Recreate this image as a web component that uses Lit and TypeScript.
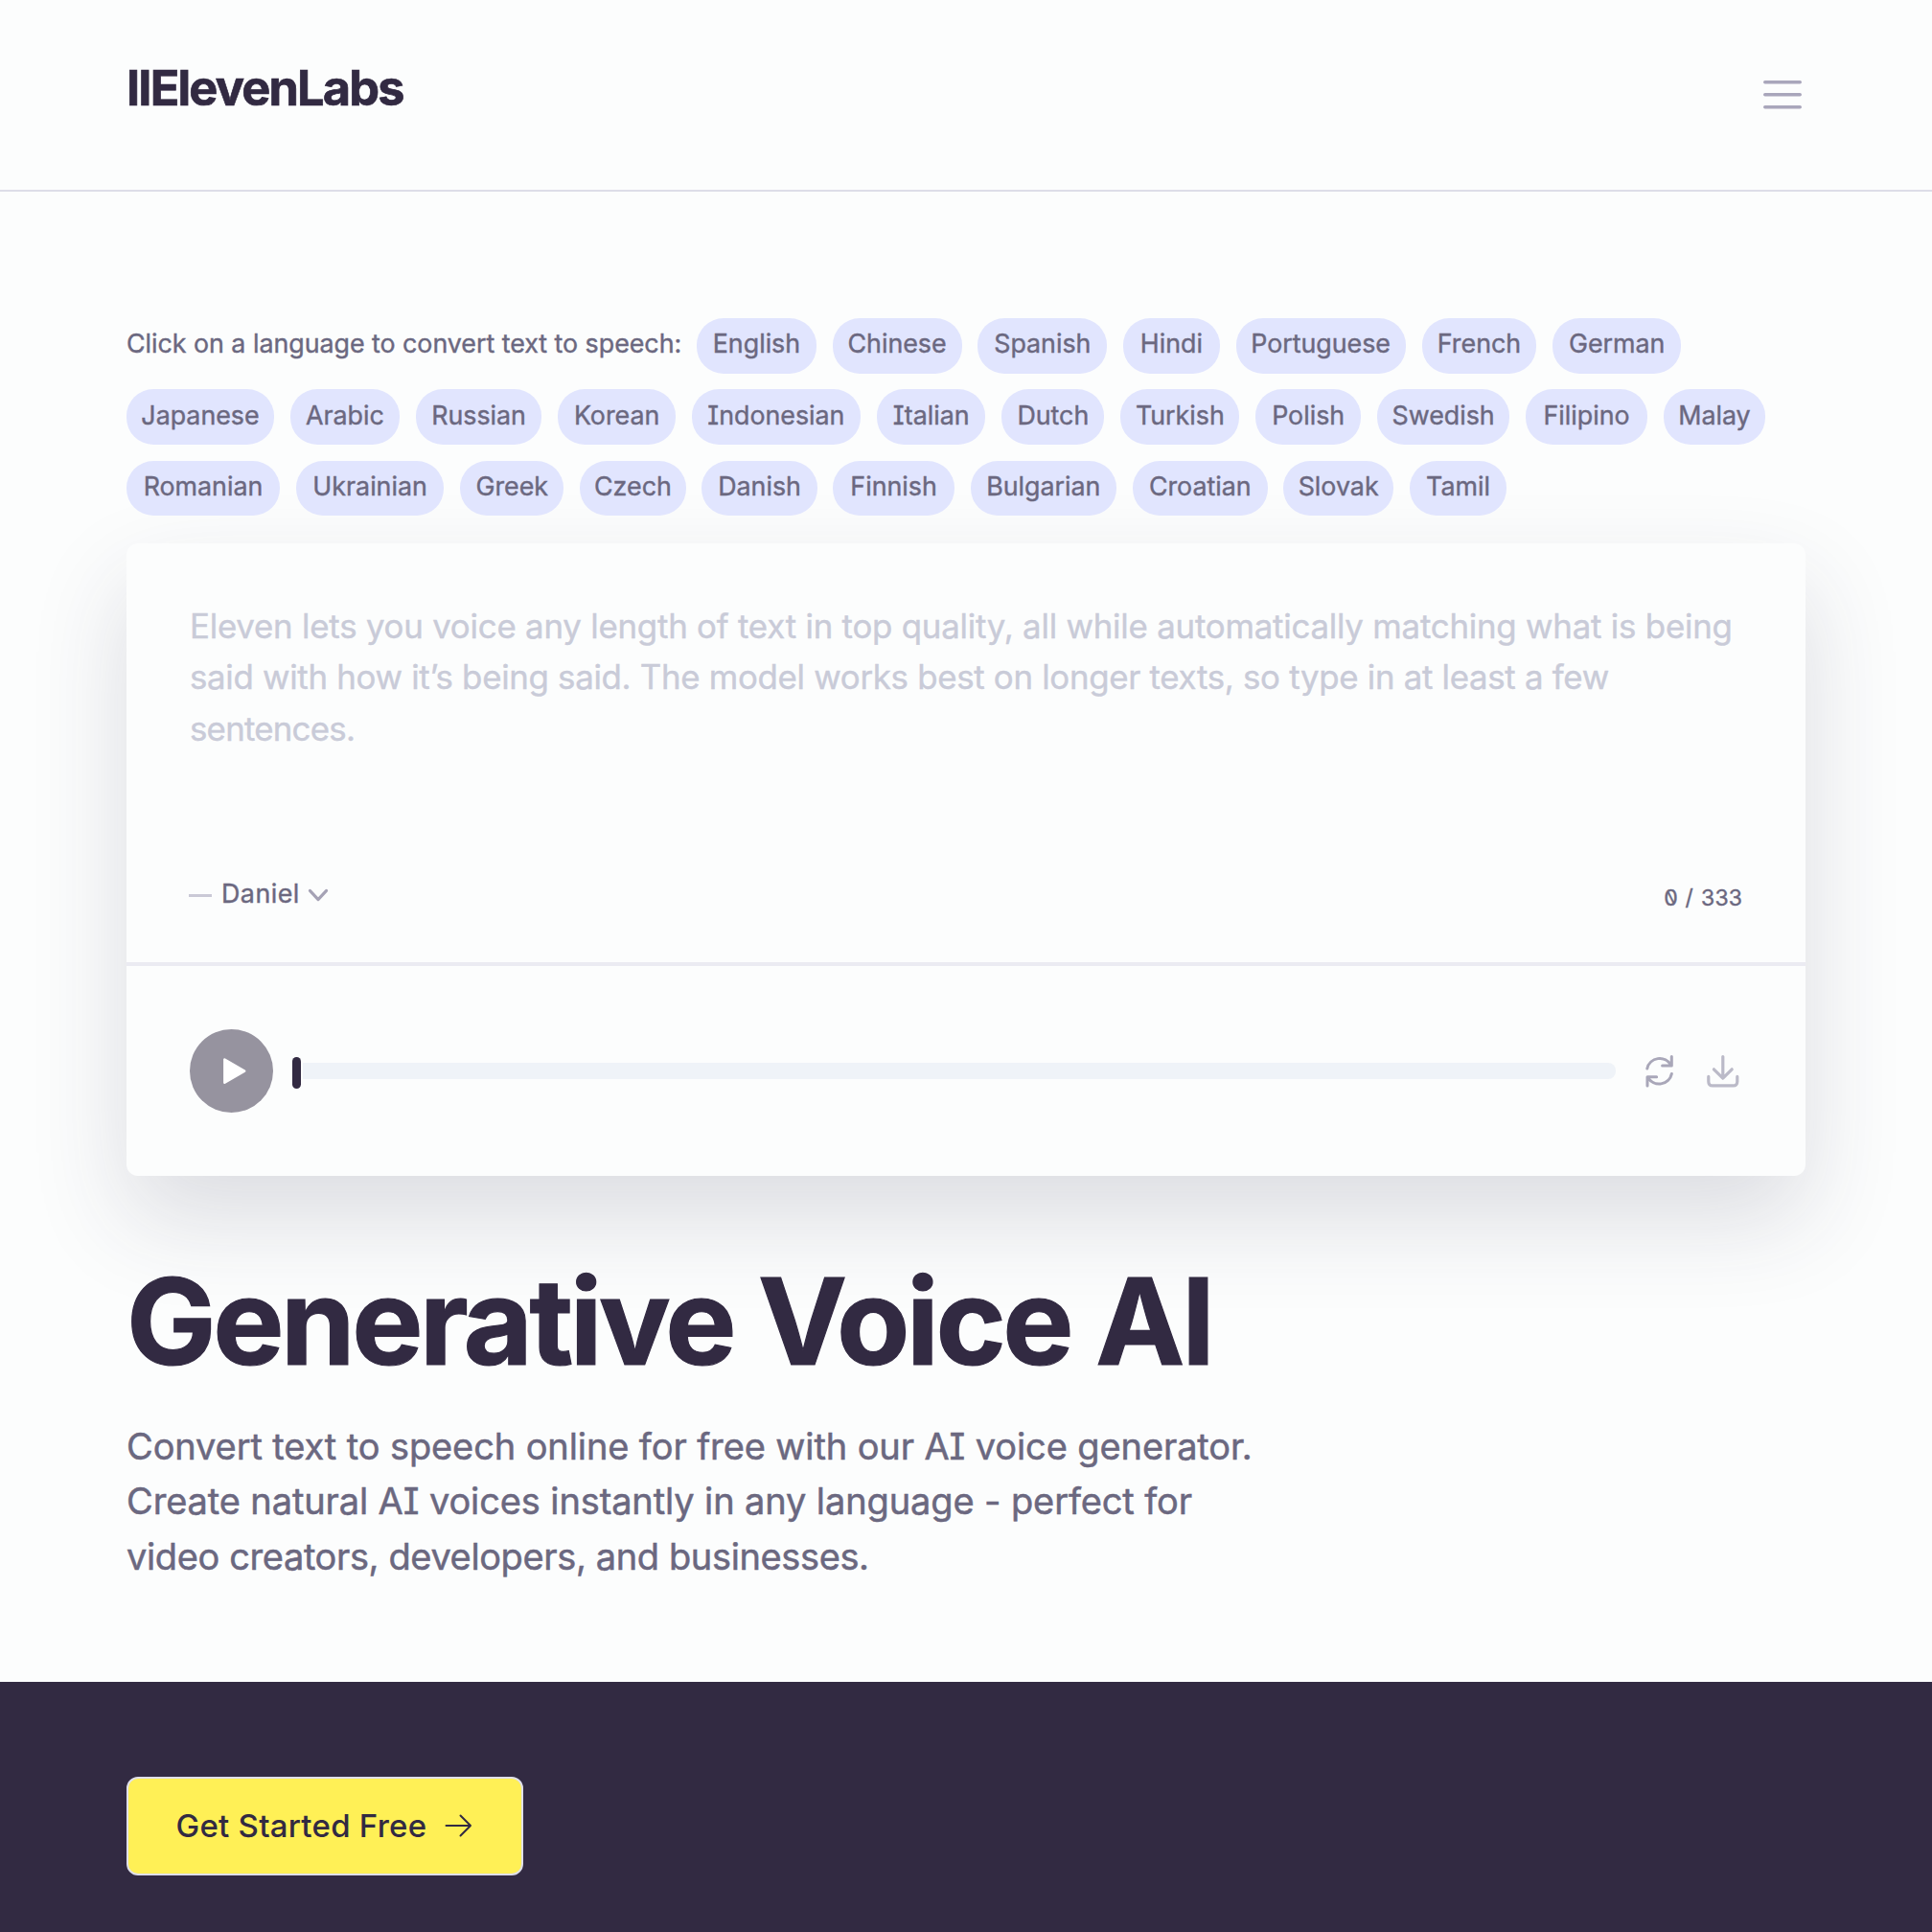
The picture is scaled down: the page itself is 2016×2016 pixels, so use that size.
import { LitElement, html, css } from "lit";
import { customElement } from "lit/decorators.js";
import { styleMap } from "lit/directives/style-map.js";

type Language = [name: string, width: number];
type Line = [text: string, tracking: number];

const LANGUAGES: Language[] = [
  ["English", 124.6], ["Chinese", 135], ["Spanish", 134.8], ["Hindi", 100.6],
  ["Portuguese", 177.2], ["French", 119.9], ["German", 133.8],
  ["Japanese", 154], ["Arabic", 114], ["Russian", 131.8], ["Korean", 122.6],
  ["Indonesian", 176.3], ["Italian", 113.5], ["Dutch", 107.2], ["Turkish", 124.2],
  ["Polish", 109.7], ["Swedish", 138.5], ["Filipino", 126.8], ["Malay", 106.2],
  ["Romanian", 160], ["Ukrainian", 154.5], ["Greek", 108.2], ["Czech", 110.4],
  ["Danish", 120.2], ["Finnish", 126.2], ["Bulgarian", 152.6], ["Croatian", 140.6],
  ["Slovak", 114.5], ["Tamil", 101.6],
];

const PROMPT: Line[] = [
  ["Eleven lets you voice any length of text in top quality, all while automatically matching what is being", -0.205],
  ["said with how it’s being said. The model works best on longer texts, so type in at least a few", -0.285],
  ["sentences.", -0.75],
];

const INTRO: Line[] = [
  ["Convert text to speech online for free with our AI voice generator.", -0.11],
  ["Create natural AI voices instantly in any language - perfect for", -0.12],
  ["video creators, developers, and businesses.", -0.38],
];

const lines = (items: Line[]) =>
  items.map(
    ([text, tracking]) =>
      html`<span class="line" style=${styleMap({ letterSpacing: `${tracking}px` })}>${text}</span>`
  );

@customElement("site-header")
export class SiteHeader extends LitElement {
  static styles = css`
    :host {
      display: flex;
      justify-content: space-between;
      align-items: flex-start;
      box-sizing: border-box;
      height: 200px;
      padding: 62px 136.5px 0 132px;
      border-bottom: 2px solid #dddde8;
    }
    .logo {
      font-size: 50.5px;
      line-height: 60px;
      font-weight: 700;
      letter-spacing: -1.85px;
      -webkit-text-stroke: 0.7px #322a42;
      color: #322a42;
    }
    .menu {
      display: block;
      margin-top: 21px;
    }
  `;

  render() {
    return html`
      <div class="logo">IIElevenLabs</div>
      <svg class="menu" width="40" height="32" viewBox="0 0 40 32" fill="none" stroke="#a9a6bb" stroke-width="3.6" stroke-linecap="round">
        <path d="M1.8 2.7H38.2M1.8 15.7H38.2M1.8 28.7H38.2" />
      </svg>
    `;
  }
}

@customElement("language-picker")
export class LanguagePicker extends LitElement {
  static styles = css`
    :host {
      display: flex;
      flex-wrap: wrap;
      gap: 16.5px 16.85px;
      font-size: 26.8px;
      color: #6b6880;
    }
    .label,
    .pill {
      display: flex;
      align-items: center;
      box-sizing: border-box;
      height: 57.8px;
      padding-bottom: 5px;
      white-space: nowrap;
    }
    .label {
      width: 578.3px;
      letter-spacing: -0.02px;
    }
    .pill {
      justify-content: center;
      border-radius: 28px;
      background: #e1e5fe;
    }
  `;

  render() {
    return html`
      <span class="label">Click on a language to convert text to speech:</span>
      ${LANGUAGES.map(
        ([name, width]) =>
          html`<span class="pill" style=${styleMap({ width: `${width}px` })}>${name}</span>`
      )}
    `;
  }
}

@customElement("speech-card")
export class SpeechCard extends LitElement {
  static styles = css`
    :host {
      display: block;
      border-radius: 12px;
      background: #fcfdfd;
      box-shadow: 0 44px 100px rgba(46, 42, 78, 0.155);
    }
    .editor {
      box-sizing: border-box;
      height: 437px;
      padding: 60px 66px 0;
    }
    .prompt {
      height: 285px;
      font-size: 34.8px;
      line-height: 53.5px;
      color: #c9cbd8;
    }
    .line {
      display: block;
      white-space: nowrap;
    }
    .meta {
      display: flex;
      justify-content: space-between;
      align-items: center;
      height: 40px;
      color: #6b6880;
    }
    .voice {
      display: flex;
      align-items: center;
      font-size: 26.8px;
      line-height: 40px;
      letter-spacing: 0.5px;
    }
    .dash {
      width: 24.5px;
      height: 3px;
      margin: 5px 10px 0 -1.5px;
      background: #cac9d6;
    }
    .chevron {
      margin: 5px 0 0 7px;
    }
    .counter {
      padding-top: 10px;
      font-size: 23px;
      line-height: 40px;
      letter-spacing: 0.1px;
      word-spacing: 1.5px;
    }
    .zero {
      display: inline-block;
      transform: scaleX(-1);
      font-feature-settings: "zero";
    }
    .player {
      display: flex;
      align-items: center;
      box-sizing: border-box;
      height: 223px;
      padding: 0 66px;
      border-top: 4px solid #ebebf2;
    }
    .play {
      flex: none;
      margin-right: 20px;
    }
    .handle {
      width: 9px;
      height: 33px;
      margin: 4px 2px 0 0;
      border-radius: 4.5px;
      background: #322a42;
    }
    .track {
      flex: 1;
      height: 17px;
      border-radius: 0 8px 8px 0;
      background: #eff3f8;
    }
    .refresh {
      margin: 1px 0 0 29px;
    }
    .download {
      margin: 1px 3.5px 0 31.5px;
    }
  `;

  render() {
    return html`
      <div class="editor">
        <div class="prompt">${lines(PROMPT)}</div>
        <div class="meta">
          <div class="voice">
            <span class="dash"></span>Daniel
            <svg class="chevron" width="24" height="16" viewBox="0 0 24 16" fill="none" stroke="#a5a2b5" stroke-width="3.1" stroke-linecap="round" stroke-linejoin="round">
              <path d="M3.4 3.4L12 12.6L20.6 3.4" />
            </svg>
          </div>
          <div class="counter"><span class="zero">0</span> / 333</div>
        </div>
      </div>
      <div class="player">
        <svg class="play" width="87" height="87" viewBox="0 0 87 87">
          <circle cx="43.5" cy="43.5" r="43.5" fill="#96939f" />
          <path d="M36.4 31.5V55.7L57.1 43.6Z" fill="#fff" stroke="#fff" stroke-width="2.6" stroke-linejoin="round" />
        </svg>
        <span class="handle"></span>
        <span class="track"></span>
        <svg class="refresh" width="34" height="34" viewBox="0 0 34 34" fill="none" stroke="#a9a7b9" stroke-width="3" stroke-linecap="round" stroke-linejoin="round">
          <path d="M3.8 14A13.4 13.4 0 0 1 28.6 10.4M29.3 1.6V10.9H19.6M29.4 19.4A13.4 13.4 0 0 1 4.6 23.2M4 31.9V22.7H13.6" />
        </svg>
        <svg class="download" width="34" height="34" viewBox="0 0 34 34" fill="none" stroke="#bbbac8" stroke-width="3.2" stroke-linecap="round" stroke-linejoin="round">
          <path d="M16.8 1.6V24M7.4 14.8L16.8 24.2L26.2 14.8M1.8 22.4V27.4Q1.8 31.9 6.2 31.9H27.4Q31.8 31.9 31.8 27.4V22.4" />
        </svg>
      </div>
    `;
  }
}

@customElement("app-root")
export class AppRoot extends LitElement {
  static styles = css`
    :host {
      display: flex;
      flex-direction: column;
      height: 2016px;
      overflow: hidden;
      background: #fcfdfd;
      font-family: Inter, "Liberation Sans", sans-serif;
    }
    .main {
      box-sizing: border-box;
      height: 1555px;
      padding: 132px 132px 0;
      font-weight: 400;
      font-feature-settings: "cv08";
      -webkit-text-stroke: 0.4px currentcolor;
    }
    .card {
      margin-top: 28.5px;
    }
    .title {
      position: relative;
      margin: 82.5px 0 0;
      font-size: 124.7px;
      line-height: 140px;
      font-weight: 700;
      letter-spacing: -3.45px;
      font-feature-settings: normal;
      -webkit-text-stroke: 1.2px currentcolor;
      color: #322a42;
    }
    .intro {
      margin: 31.3px 0 0;
      font-size: 38px;
      line-height: 57.6px;
      -webkit-text-stroke: 0.5px currentcolor;
      color: #6b6880;
    }
    .line {
      display: block;
      white-space: nowrap;
    }
    .cta {
      flex: 1;
      padding: 99px 132px 0;
      background: #322a42;
    }
    .button {
      display: flex;
      align-items: center;
      box-sizing: border-box;
      width: 414px;
      height: 103px;
      padding: 0 0 2px 49.5px;
      border: 2px solid #dfdfe9;
      border-radius: 12px;
      background: #fff056;
      font: 500 33px/40px Inter, "Liberation Sans", sans-serif;
      letter-spacing: 0.25px;
      color: #322a42;
    }
    .arrow {
      margin: 1px 0 0 17.5px;
    }
  `;

  render() {
    return html`
      <site-header></site-header>
      <main class="main">
        <language-picker></language-picker>
        <speech-card class="card"></speech-card>
        <h1 class="title">Generative Voice AI</h1>
        <p class="intro">${lines(INTRO)}</p>
      </main>
      <section class="cta">
        <button class="button">
          Get Started Free
          <svg class="arrow" width="30" height="26" viewBox="0 0 30 26" fill="none" stroke="#322a42" stroke-width="2" stroke-linecap="round" stroke-linejoin="round">
            <path d="M2.5 13H28M17.5 2.5L28 13L17.5 23.5" />
          </svg>
        </button>
      </section>
    `;
  }
}
